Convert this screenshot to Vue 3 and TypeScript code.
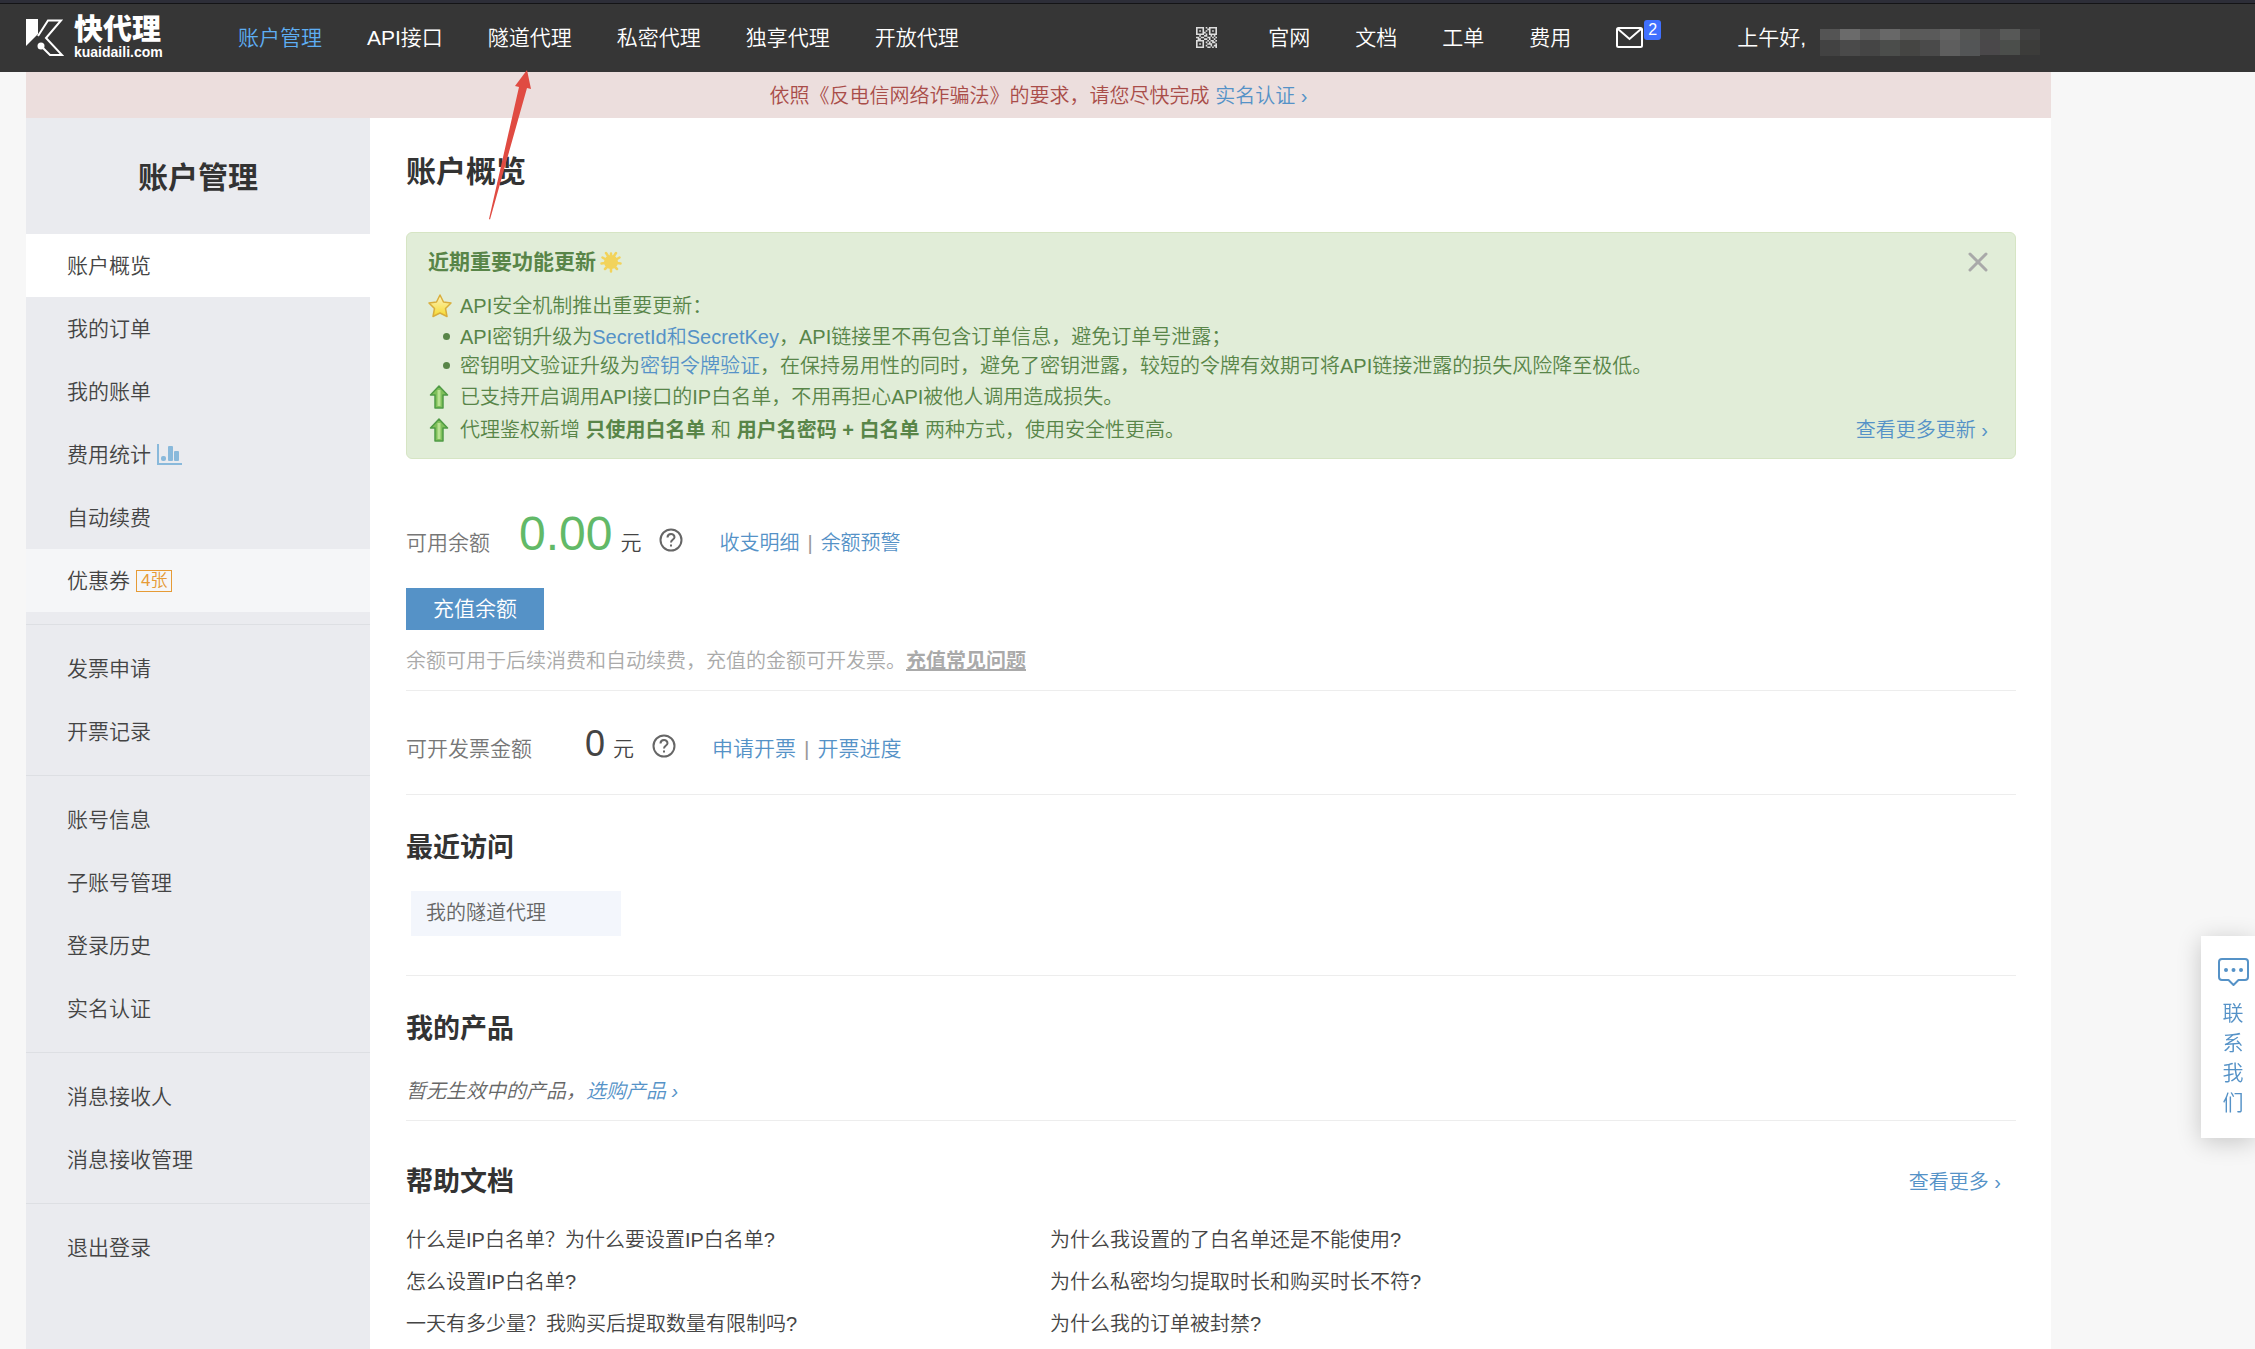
<script setup lang="ts">
interface MenuItem {
  label: string
  state?: 'active' | 'hover'
  chart?: boolean
  badge?: string
}

const products: string[] = ['账户管理', 'API接口', '隧道代理', '私密代理', '独享代理', '开放代理']
const shortcuts: string[] = ['官网', '文档', '工单', '费用']

const menu: MenuItem[][] = [
  [
    { label: '账户概览', state: 'active' },
    { label: '我的订单' },
    { label: '我的账单' },
    { label: '费用统计', chart: true },
    { label: '自动续费' },
    { label: '优惠券', state: 'hover', badge: '4张' },
  ],
  [{ label: '发票申请' }, { label: '开票记录' }],
  [{ label: '账号信息' }, { label: '子账号管理' }, { label: '登录历史' }, { label: '实名认证' }],
  [{ label: '消息接收人' }, { label: '消息接收管理' }],
  [{ label: '退出登录' }],
]

const docs: string[] = [
  '什么是IP白名单？为什么要设置IP白名单?',
  '为什么我设置的了白名单还是不能使用?',
  '怎么设置IP白名单?',
  '为什么私密均匀提取时长和购买时长不符?',
  '一天有多少量？我购买后提取数量有限制吗?',
  '为什么我的订单被封禁?',
]

const maskTop = ['#545454', '#6b6b6b', '#5b5b5b', '#686868', '#5a5a59', '#5a5a5a', '#626262', '#545554', '#494949', '#575857', '#404040']
const maskBottom = ['#424242', '#4a4a4a', '#454545', '#4b4d4b', '#454543', '#4a4a4a', '#5e5e5e', '#535556', '#4a484a', '#4b4e4b', '#3c3c3a']

const qr: string[] = [
  '1111101011111',
  '1000100110001',
  '1010101010101',
  '1000110010001',
  '1111101011111',
  '0010011001010',
  '1101100110101',
  '0110011010010',
  '1111100101101',
  '1000101010110',
  '1010100111001',
  '1000101001011',
  '1111100110101',
]
const qrPath = qr
  .map((row, y) => [...row].map((c, x) => (c === '1' ? `M${x} ${y}h1v1h-1z` : '')).join(''))
  .join('')
</script>

<template>
  <div class="page">
    <header class="topbar">
      <div class="topbar-inner">
        <a class="logo" href="#">
          <svg width="38" height="38" viewBox="0 0 38 38" aria-hidden="true">
            <path d="M0 0H12V15L0 27Z" fill="#fff" />
            <path d="M12 17L22 1.500H35L20 19L36 36H24L15 27" fill="none" stroke="#fff" stroke-width="2" />
            <circle cx="15" cy="27" r="3.500" fill="#fff" />
          </svg>
          <span class="logo-text">
            <strong>快代理</strong>
            <small>kuaidaili.com</small>
          </span>
        </a>
        <nav class="nav">
          <a v-for="(p, i) in products" :key="p" href="#" :class="{ current: i === 0 }">{{ p }}</a>
        </nav>
        <nav class="nav tools">
          <a class="qr" href="#" aria-label="二维码">
            <svg width="21" height="21" viewBox="0 0 13 13" aria-hidden="true"><path :d="qrPath" fill="#dedede" /></svg>
          </a>
          <a v-for="s in shortcuts" :key="s" href="#">{{ s }}</a>
          <a class="mail" href="#">
            <svg width="27" height="21" viewBox="0 0 27 21" aria-hidden="true">
              <rect x="1" y="1" width="25" height="19" rx="1.500" fill="none" stroke="#fff" stroke-width="2" />
              <path d="M2 2L13.500 12L25 2" fill="none" stroke="#fff" stroke-width="2" />
            </svg>
            <span class="count">2</span>
          </a>
        </nav>
        <div class="user">
          <span>上午好,</span>
          <svg width="220" height="28" viewBox="0 0 220 28" aria-hidden="true">
            <rect v-for="(c, i) in maskTop" :key="'t' + i" :x="i * 20" y="0" width="20" height="11" :fill="c" />
            <rect v-for="(c, i) in maskBottom" :key="'b' + i" :x="i * 20" y="11" width="20" :height="i > 7 ? 15 : 16" :fill="c" />
          </svg>
        </div>
      </div>
    </header>

    <div class="container">
      <div class="notice">
        依照《反电信网络诈骗法》的要求，请您尽快完成 <a href="#">实名认证 ›</a>
      </div>
      <div class="columns">
        <aside class="sidebar">
          <h2>账户管理</h2>
          <ul v-for="(group, g) in menu" :key="g">
            <li v-for="item in group" :key="item.label">
              <a href="#" :class="item.state">
                {{ item.label }}
                <svg v-if="item.chart" width="25" height="21" viewBox="0 0 25 21" aria-hidden="true">
                  <path d="M1 0V20H25" fill="none" stroke="#89b9db" stroke-width="2" />
                  <rect x="4" y="12" width="5" height="5" rx="2" fill="#89b9db" />
                  <rect x="11" y="2" width="5" height="15" rx="1" fill="#89b9db" />
                  <rect x="17" y="7" width="5" height="10" rx="1" fill="#89b9db" />
                </svg>
                <span v-if="item.badge" class="tag">{{ item.badge }}</span>
              </a>
            </li>
          </ul>
        </aside>

        <main class="main">
          <h1>账户概览</h1>

          <section class="updates">
            <div class="updates-head">
              <h3>近期重要功能更新</h3>
              <svg width="22" height="22" viewBox="0 0 22 22" aria-hidden="true">
                <circle cx="11" cy="11" r="7" fill="#f2d35b" />
                <g stroke="#f2d35b" stroke-linecap="round">
                  <path d="M11 2.500V5M11 17V20.500M1.500 12.500L5 12M17 12L20.500 12.500M6 2L8 5M16 2L14 5M2.500 6.500L5 8M19.500 6.500L17 8M5 18L7 16M17 18L15 16" stroke-width="2.500" />
                </g>
              </svg>
              <button type="button" class="close" aria-label="关闭">
                <svg width="20" height="20" viewBox="0 0 20 20" aria-hidden="true">
                  <path d="M2 2L18 18M18 2L2 18" stroke="#a9a9a9" stroke-width="3" stroke-linecap="round" />
                </svg>
              </button>
            </div>
            <ul>
              <li>
                <span class="mark">
                  <svg width="24" height="24" viewBox="0 0 24 24" aria-hidden="true">
                    <defs>
                      <linearGradient id="star" x1="0" y1="0" x2="0" y2="1">
                        <stop offset="0" stop-color="#fbf3c4" />
                        <stop offset="1" stop-color="#f7da2c" />
                      </linearGradient>
                    </defs>
                    <path d="M12 1L15.500 8L23 9L17.500 14.500L19 22.500L12 19L5 22.500L6.500 14.500L1 9L8.500 8Z" fill="url(#star)" stroke="#d9ae3c" stroke-width="1.500" stroke-linejoin="round" />
                  </svg>
                </span>
                API安全机制推出重要更新：
              </li>
              <li class="sub">
                <span class="mark dot"></span>
                API密钥升级为<a href="#">SecretId和SecretKey</a>，API链接里不再包含订单信息，避免订单号泄露；
              </li>
              <li class="sub">
                <span class="mark dot"></span>
                密钥明文验证升级为<a href="#">密钥令牌验证</a>，在保持易用性的同时，避免了密钥泄露，较短的令牌有效期可将API链接泄露的损失风险降至极低。
              </li>
              <li v-for="n in 2" :key="n">
                <span class="mark">
                  <svg width="24" height="24" viewBox="0 0 24 24" aria-hidden="true">
                    <path d="M11 1L19.500 10H15V23H7V10H2.500Z" fill="#7fc05a" stroke="#4f9a45" stroke-width="1.500" stroke-linejoin="round" />
                    <path d="M11 5V21" stroke="#b9e192" stroke-width="3" />
                  </svg>
                </span>
                <template v-if="n === 1">已支持开启调用API接口的IP白名单，不用再担心API被他人调用造成损失。</template>
                <template v-else>
                  <span>代理鉴权新增 <b>只使用白名单</b> 和 <b>用户名密码 + 白名单</b> 两种方式，使用安全性更高。</span>
                  <a class="more" href="#">查看更多更新 ›</a>
                </template>
              </li>
            </ul>
          </section>

          <section class="balance">
            <div class="amount-row">
              <span class="label">可用余额</span>
              <span class="money">0.00</span>
              <span class="unit">元</span>
              <svg class="help" width="24" height="24" viewBox="0 -2 24 24" aria-hidden="true">
                <circle cx="12" cy="12" r="10.500" />
                <path d="M8.500 9.500C8.500 5 15.500 5 15.500 9.200C15.500 11.500 12 11.500 12 14.500M12 16.500V18.500" />
              </svg>
              <span class="links"><a href="#">收支明细</a><i>|</i><a href="#">余额预警</a></span>
            </div>
            <button type="button" class="recharge">充值余额</button>
            <p class="hint">余额可用于后续消费和自动续费，充值的金额可开发票。<a href="#">充值常见问题</a></p>
          </section>

          <section class="invoice">
            <div class="amount-row">
              <span class="label">可开发票金额</span>
              <span class="money small">0</span>
              <span class="unit">元</span>
              <svg class="help" width="24" height="24" viewBox="0 -2 24 24" aria-hidden="true">
                <circle cx="12" cy="12" r="10.500" />
                <path d="M8.500 9.500C8.500 5 15.500 5 15.500 9.200C15.500 11.500 12 11.500 12 14.500M12 16.500V18.500" />
              </svg>
              <span class="links large"><a href="#">申请开票</a><i>|</i><a href="#">开票进度</a></span>
            </div>
          </section>

          <section class="recent">
            <h2>最近访问</h2>
            <a class="chip" href="#">我的隧道代理</a>
          </section>

          <section class="mine">
            <h2>我的产品</h2>
            <p>暂无生效中的产品，<a href="#">选购产品 ›</a></p>
          </section>

          <section class="docs">
            <div class="docs-head">
              <h2>帮助文档</h2>
              <a href="#">查看更多 ›</a>
            </div>
            <ul>
              <li v-for="d in docs" :key="d"><a href="#">{{ d }}</a></li>
            </ul>
          </section>
        </main>
      </div>
    </div>

    <a class="contact" href="#">
      <svg width="31" height="29" viewBox="0 0 31 29" fill="none" stroke="#5592c7" stroke-width="2" aria-hidden="true">
        <path d="M4 1H27Q30 1 30 4V19Q30 22 27 22H20.500L15.500 27L10.500 22H4Q1 22 1 19V4Q1 1 4 1Z" stroke-linejoin="round" />
        <path d="M8 12H8.010M15.500 12H15.510M23 12H23.010" stroke-width="4" stroke-linecap="round" />
      </svg>
      <span>联系我们</span>
    </a>

    <svg class="pointer" width="46" height="152" viewBox="0 0 46 152" aria-hidden="true">
      <path d="M40 0L28 16L32 17L2 149L3 149.500L40 18L44 19Z" fill="#e04b42" />
    </svg>
  </div>
</template>

<style>
body {
  margin: 0;
  background: #f7f7f7;
}
</style>

<style scoped>
.page {
  position: relative;
  display: flex;
  flex-direction: column;
  min-height: 100vh;
  font: 20px/30px "Liberation Sans", "Noto Sans CJK SC", sans-serif;
  font-weight: 350;
  color: #444;
}
.page * {
  box-sizing: border-box;
}
a {
  color: #5592c7;
  text-decoration: none;
}
ul {
  list-style: none;
  margin: 0;
  padding: 0;
}
h1, h2, h3, p {
  margin: 0;
}
b {
  font-weight: 700;
}
button {
  font: inherit;
  border: 0;
  padding: 0;
  cursor: pointer;
}

.topbar {
  background: #363636;
  border-top: 3px solid #2d2e38;
  box-shadow: inset 0 1px #141416;
}
.topbar-inner {
  display: flex;
  align-items: center;
  height: 69px;
  margin: 0 215px 0 26px;
  font-size: 21px;
  white-space: nowrap;
}
.logo {
  display: flex;
  align-items: center;
  gap: 10px;
  width: 212px;
  color: #fff;
}
.logo-text {
  display: flex;
  flex-direction: column;
}
.logo-text strong {
  font-size: 29px;
  line-height: 28px;
  font-weight: 900;
}
.logo-text small {
  font-size: 14px;
  line-height: 16px;
  font-weight: 700;
}
.nav {
  display: flex;
  align-items: center;
  gap: 45px;
}
.nav a {
  color: #fff;
}
.nav .current {
  color: #5eaef3;
}
.tools {
  margin-left: auto;
}
.tools svg {
  display: block;
}
.qr {
  padding-right: 6px;
}
.mail {
  position: relative;
}
.count {
  position: absolute;
  left: 28px;
  top: -7px;
  width: 17px;
  border-radius: 3px;
  background: #4070ff;
  font-size: 16px;
  line-height: 20px;
  text-align: center;
}
.user {
  display: flex;
  align-items: center;
  gap: 14px;
  margin-left: 94px;
  color: #fff;
}
.user svg {
  margin-top: 10px;
}

.container {
  flex: 1;
  display: flex;
  flex-direction: column;
  margin: 0 204px 0 26px;
  background: #fff;
}
.notice {
  padding-top: 2px;
  background: #ecdedd;
  color: #a94d49;
  line-height: 44px;
  text-align: center;
}
.columns {
  flex: 1;
  display: flex;
}

.sidebar {
  width: 344px;
  flex: none;
  background: #eaebef;
  font-size: 21px;
}
.sidebar h2 {
  padding-top: 4px;
  font-size: 30px;
  line-height: 112px;
  color: #333;
  text-align: center;
}
.sidebar ul + ul {
  margin-top: 12px;
  padding-top: 12px;
  border-top: 1px solid #dddfe3;
}
.sidebar a {
  display: flex;
  align-items: center;
  gap: 6px;
  height: 63px;
  padding-left: 41px;
  color: #444;
}
.sidebar .active {
  background: #fff;
}
.sidebar .hover {
  background: #f5f6f8;
}
.tag {
  padding: 0 4px;
  border: 1px solid #e69b36;
  color: #e69b36;
  font-size: 17px;
  line-height: 20px;
}

.main {
  flex: 1;
  min-width: 0;
  padding: 34px 35px 0 36px;
}
.main h1 {
  font-size: 30px;
  line-height: 40px;
  color: #333;
}
.main h2 {
  font-size: 27px;
  line-height: 38px;
  color: #333;
}

.updates {
  margin-top: 40px;
  padding: 14px 27px 12px 21px;
  border: 1px solid #d6e5c4;
  border-radius: 6px;
  background: #e1edd8;
  color: #588548;
}
.updates-head {
  display: flex;
  align-items: center;
  gap: 4px;
  margin-bottom: 12px;
}
.updates h3 {
  font-size: 21px;
  line-height: 30px;
}
.close {
  display: flex;
  margin-left: auto;
  background: none;
}
.updates li {
  display: flex;
  align-items: center;
  height: 33px;
}
.updates .sub {
  height: 29px;
}
.mark {
  display: flex;
  width: 32px;
}
.dot::before {
  content: "";
  width: 7px;
  height: 7px;
  margin-left: 15px;
  border-radius: 50%;
  background: #588548;
}
.more {
  margin-left: auto;
}

.balance {
  padding: 47px 0 14px;
  border-bottom: 1px solid #ededed;
}
.amount-row {
  display: flex;
  align-items: baseline;
}
.label {
  font-size: 21px;
  color: #777;
}
.money {
  margin-left: 29px;
  font-size: 48px;
  line-height: 56px;
  color: #62b968;
}
.money.small {
  margin-left: 53px;
  font-size: 36px;
  line-height: 42px;
  color: #444;
}
.unit {
  margin-left: 8px;
  font-size: 21px;
}
.help {
  margin-left: 18px;
  overflow: visible;
  fill: none;
  stroke: #666;
  stroke-width: 2;
}
.links {
  margin-left: 36px;
}
.links.large {
  font-size: 21px;
}
.links i {
  margin: 0 8px;
  font-style: normal;
  color: #999;
}
.recharge {
  display: block;
  width: 138px;
  margin-top: 26px;
  background: #5592c7;
  color: #fff;
  font-size: 21px;
  line-height: 42px;
}
.hint {
  margin-top: 16px;
  color: #aaa;
}
.hint a {
  color: #aaa;
  font-weight: 700;
  text-decoration: underline;
}
.invoice {
  padding: 32px 0 29px;
  border-bottom: 1px solid #ededed;
}
.recent {
  padding: 34px 0 39px;
  border-bottom: 1px solid #ededed;
}
.chip {
  display: block;
  width: 210px;
  margin: 24px 0 0 5px;
  padding-left: 15px;
  background: #f3f6fc;
  color: #666;
  line-height: 45px;
}
.mine {
  padding: 34px 0 14px;
  border-bottom: 1px solid #ededed;
}
.mine p {
  margin-top: 28px;
  color: #666;
  font-style: italic;
}
.docs {
  padding-top: 42px;
}
.docs-head {
  display: flex;
  align-items: center;
  justify-content: space-between;
  margin-bottom: 18px;
  padding-right: 15px;
}
.docs ul {
  display: grid;
  grid-template-columns: 40% 60%;
}
.docs li {
  line-height: 42px;
}
.docs li a {
  color: #444;
}

.contact {
  position: fixed;
  right: 0;
  bottom: 211px;
  display: flex;
  flex-direction: column;
  align-items: center;
  gap: 11px;
  width: 54px;
  padding: 22px 0 20px 10px;
  background: #fff;
  box-shadow: 0 4px 24px rgba(0, 0, 0, 0.2);
  font-size: 21px;
}
.contact span {
  width: 21px;
}
.pointer {
  position: absolute;
  left: 487px;
  top: 70px;
}
</style>
